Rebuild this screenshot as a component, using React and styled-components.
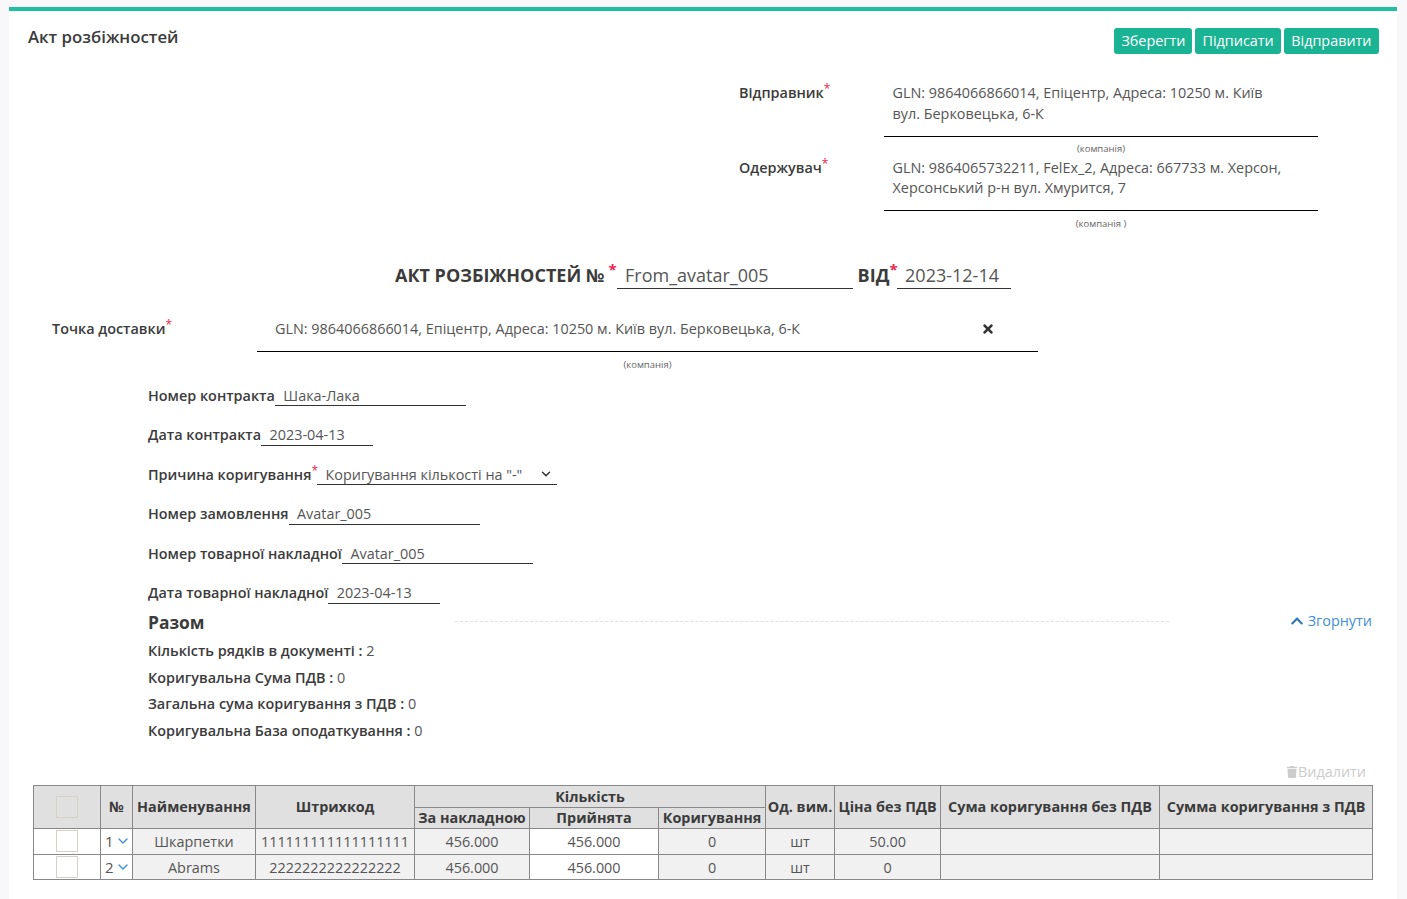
import React from 'react';
import styled, { createGlobalStyle } from 'styled-components';
import { FaTimes, FaChevronUp, FaTrash } from 'react-icons/fa';
import { ChevronDown } from 'lucide-react';

const Global = createGlobalStyle`
  html, body { margin: 0; padding: 0; background: #f8f8fb; }
  body { font-family: "Open Sans", "Noto Sans", sans-serif; font-size: 14.4px; color: #555; overflow: hidden; }
`;
const Card = styled.main`
  margin: 7px 10px 0 9px; height: 892px; box-sizing: border-box; background: #fff; border-top: 4px solid #1fc0a0;
`;
const Header = styled.header`
  display: flex; justify-content: space-between; align-items: flex-start; height: 72px; box-sizing: border-box;
  padding: 14px 18px 0 19px;
`;
const PageTitle = styled.h1`
  margin: 0; font-size: 16.8px; line-height: 23px; font-weight: 600; color: #3b3b3b;
`;
const Actions = styled.div` display: flex; gap: 3px; margin-top: 3px; `;
const Action = styled.button`
  height: 26px; padding: 0 ${p => p.$px}px 2px; border: 0; border-radius: 3px; background: #1ab394; color: #fff;
  font: 400 14.4px "Open Sans", sans-serif;
`;
const Party = styled.section`
  display: grid; grid-template-columns: 145px 434px; margin-left: 730px; color: #555;
`;
const PartyLabel = styled.div`
  font-weight: 600; color: #3b3b3b; line-height: 19px;
`;
const Req = styled.sup`
  color: #e8264f; font-weight: ${p => p.$bold ? 700 : 400}; font-size: ${p => p.$size || 12}px; line-height: 0; vertical-align: baseline; position: relative; top: ${p => p.$top || -5}px; margin-left: ${p => p.$ml || 0}px; margin-right: ${p => p.$mr || 0}px;
`;
const PartyValue = styled.div`
  padding: 0 30px ${p => p.$pb}px 8.5px; line-height: ${p => p.$lh}px; border-bottom: 1px solid #000;
`;
const Caption = styled.div`
  font-size: 9.5px; line-height: 19px; height: 21px; padding-top: ${p => p.$pt}px; box-sizing: border-box; text-align: center; color: #666;
`;
const PartyCaption = styled(Caption)` grid-column: 2; `;
const DocLine = styled.div`
  display: flex; align-items: flex-end; margin: 25px 0 0 386px; height: 32px;
`;
const DocLabel = styled.span`
  font-size: 18px; font-weight: 700; color: #3b3b3b; line-height: 28px; white-space: nowrap;
`;
const DocValue = styled.div`
  width: ${p => p.$w}px; box-sizing: border-box; padding: 0 0 1px 8.5px; font-size: 18px; line-height: 24px; color: #555; border-bottom: 1px solid #333; margin-right: ${p => p.$mr || 0}px;
`;
const Delivery = styled.section`
  display: grid; grid-template-columns: 205px 781px; margin: 19px 0 0 43px;
`;
const DeliveryValue = styled.div`
  display: flex; justify-content: space-between; align-items: center; height: 44px; box-sizing: border-box; padding: 0 43px 2px 18px; border-bottom: 1px solid #000; line-height: 20px;
  svg { color: #333; font-size: 14px; }
`;
const DeliveryLabel = styled(PartyLabel)` line-height: 42px; height: 44px; `;
const DeliveryCaption = styled(Caption)` grid-column: 2; `;
const Fields = styled.div`
  display: flex; flex-direction: column; gap: 14.5px; margin: 8px 0 0 139px;
`;
const Field = styled.div` display: flex; align-items: flex-end; height: 25px; `;
const FieldLabel = styled.span` font-weight: 600; color: #3b3b3b; line-height: 20px; margin-bottom: .4px; white-space: nowrap; `;
const FieldValue = styled.div`
  display: flex; justify-content: space-between; align-items: center; width: ${p => p.$w}px; box-sizing: border-box; padding: 0 4px .8px 8.5px; height: 20px; line-height: 19px; border-bottom: 1px solid #333; white-space: nowrap;
  svg { color: #333; }
`;
const TotalsHead = styled.div`
  display: flex; align-items: center; margin: 3px 25px 0 139px; height: 30px;
`;
const TotalsTitle = styled.h2`
  margin: 0; width: 307px; font-size: 17.4px; line-height: 30px; font-weight: 700; color: #3b3b3b;
`;
const Dots = styled.div` width: 714px; border-top: 1px dashed #e0e0e0; margin-top: -1px; `;
const Collapse = styled.a`
  margin-left: auto; color: #3f8fd2; display: flex; align-items: center; gap: 4px; line-height: 20px; margin-top: -2px;
  svg { color: #337ab7; font-size: 14px; }
`;
const Totals = styled.div` margin: 1.4px 0 0 139px; display: flex; flex-direction: column; `;
const TotalRow = styled.div` height: 26.7px; line-height: 26.7px; span { font-weight: 600; color: #3b3b3b; } `;
const DeleteBar = styled.div`
  display: flex; justify-content: flex-end; align-items: center; height: 20px; margin: 17.1px 31px 3px 0; color: #ccc; line-height: 20px;
  svg { font-size: 12px; }
`;
const Table = styled.table`
  margin-left: 24px; width: 1340px; table-layout: fixed; border-collapse: collapse; color: #555;
  th, td { border: 1px solid #888; padding: 0; text-align: center; white-space: nowrap; overflow: hidden; }
  th { background: #e0e0e0; font-weight: 700; color: #3b3b3b; }
`;
const HeadRow = styled.tr` height: ${p => p.$h}px; `;
const BodyRow = styled.tr`
  height: ${p => p.$h}px;
  td { background: #f1f1f1; padding-top: ${p => p.$pt}px; }
`;
const WhiteCell = styled.td` && { background: #fff; } `;
const NumInner = styled.div`
  display: flex; align-items: center; justify-content: space-between; padding: 0 1px 0 4px; font-size: 15px; color: #555; svg { color: #3f8fd2; }
`;
const Check = styled.div`
  width: 20px; height: 20px; border: 1px solid #d5d0c8; margin: 0 auto; background: ${p => p.$head ? '#e0e0e0' : '#fff'};
`;

const widths = [67, 32, 123, 159, 115, 129, 107, 69, 106, 219, 213];

const fields = [
  ['Номер контракта', 'Шака-Лака', 191],
  ['Дата контракта', '2023-04-13', 112],
  null,
  ['Номер замовлення', 'Avatar_005', 191],
  ['Номер товарної накладної', 'Avatar_005', 191],
  ['Дата товарної накладної', '2023-04-13', 112],
];

const rows = [
  ['1', 'Шкарпетки', '111111111111111111', '456.000', '456.000', '0', 'шт', '50.00', 26, 0],
  ['2', 'Abrams', '2222222222222222', '456.000', '456.000', '0', 'шт', '0', 25, 1],
];

export default function App() {
  return (
    <>
      <Global />
      <Card>
        <Header>
          <PageTitle>Акт розбіжностей</PageTitle>
          <Actions>
            <Action $px={7}>Зберегти</Action>
            <Action $px={7}>Підписати</Action>
            <Action $px={7.5}>Відправити</Action>
          </Actions>
        </Header>
        <Party>
          <PartyLabel>Відправник<Req>*</Req></PartyLabel>
          <PartyValue $pb={12} $lh={20.6}>GLN: 9864066866014, Епіцентр, Адреса: 10250 м. Київ вул. Берковецька, 6-К</PartyValue>
          <PartyCaption $pt={2}>(компанія)</PartyCaption>
          <PartyLabel>Одержувач<Req>*</Req></PartyLabel>
          <PartyValue $pb={12} $lh={20}>GLN: 9864065732211, FelEx_2, Адреса: 667733 м. Херсон, Херсонський р-н вул. Хмурится, 7</PartyValue>
          <PartyCaption $pt={3}>(компанія )</PartyCaption>
        </Party>
        <DocLine>
          <DocLabel>АКТ РОЗБІЖНОСТЕЙ №<Req $bold $size={15} $top={-7} $ml={4}>*</Req></DocLabel>
          <DocValue $w={236} $mr={5}>From_avatar_005</DocValue>
          <DocLabel>ВІД<Req $bold $size={15} $top={-7} $mr={-1}>*</Req></DocLabel>
          <DocValue $w={114}>2023-12-14</DocValue>
        </DocLine>
        <Delivery>
          <DeliveryLabel>Точка доставки<Req>*</Req></DeliveryLabel>
          <DeliveryValue>GLN: 9864066866014, Епіцентр, Адреса: 10250 м. Київ вул. Берковецька, 6-К<FaTimes /></DeliveryValue>
          <DeliveryCaption $pt={3}>(компанія)</DeliveryCaption>
        </Delivery>
        <Fields>
          {fields.map((f, i) => f ? (
            <Field key={i}><FieldLabel>{f[0]}</FieldLabel><FieldValue $w={f[2]}>{f[1]}</FieldValue></Field>
          ) : (
            <Field key={i}>
              <FieldLabel>Причина коригування<Req $mr={-1}>*</Req></FieldLabel>
              <FieldValue $w={240}>Коригування кількості на "-"<ChevronDown size={14} strokeWidth={2.5} /></FieldValue>
            </Field>
          ))}
        </Fields>
        <TotalsHead>
          <TotalsTitle>Разом</TotalsTitle>
          <Dots />
          <Collapse><FaChevronUp />Згорнути</Collapse>
        </TotalsHead>
        <Totals>
          <TotalRow><span>Кількість рядків в документі :</span> 2</TotalRow>
          <TotalRow><span>Коригувальна Сума ПДВ :</span> 0</TotalRow>
          <TotalRow><span>Загальна сума коригування з ПДВ :</span> 0</TotalRow>
          <TotalRow><span>Коригувальна База оподаткування :</span> 0</TotalRow>
        </Totals>
        <DeleteBar><FaTrash />Видалити</DeleteBar>
        <Table>
          <colgroup>{widths.map((w, i) => <col key={i} width={w} />)}</colgroup>
          <thead>
            <HeadRow $h={22}>
              <th rowSpan={2}><Check $head /></th>
              <th rowSpan={2}>№</th>
              <th rowSpan={2}>Найменування</th>
              <th rowSpan={2}>Штрихкод</th>
              <th colSpan={3}>Кількість</th>
              <th rowSpan={2}>Од. вим.</th>
              <th rowSpan={2}>Ціна без ПДВ</th>
              <th rowSpan={2}>Сума коригування без ПДВ</th>
              <th rowSpan={2}>Сумма коригування з ПДВ</th>
            </HeadRow>
            <HeadRow $h={21}>
              <th>За накладною</th>
              <th>Прийнята</th>
              <th>Коригування</th>
            </HeadRow>
          </thead>
          <tbody>
            {rows.map(r => (
              <BodyRow key={r[0]} $h={r[8]} $pt={r[9]}>
                <WhiteCell><Check /></WhiteCell>
                <WhiteCell><NumInner>{r[0]}<ChevronDown size={16} /></NumInner></WhiteCell>
                <td>{r[1]}</td>
                <td>{r[2]}</td>
                <td>{r[3]}</td>
                <WhiteCell>{r[4]}</WhiteCell>
                <td>{r[5]}</td>
                <td>{r[6]}</td>
                <td>{r[7]}</td>
                <td></td>
                <td></td>
              </BodyRow>
            ))}
          </tbody>
        </Table>
      </Card>
    </>
  );
}
